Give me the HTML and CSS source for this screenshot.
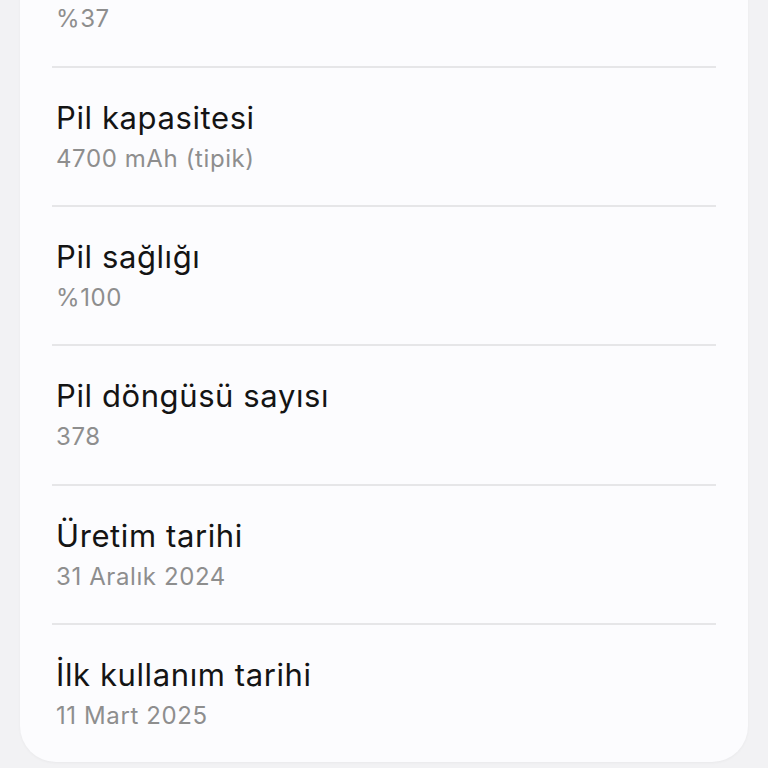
FILE: index.html
```html
<!DOCTYPE html>
<html lang="tr">
<head>
<meta charset="utf-8">
<link rel="stylesheet" href="styles.css">
</head>
<body>
<div class="screen">
  <div class="card">
    <div class="row row-partial">
      <div class="value">%37</div>
    </div>
    <div class="row">
      <div class="title">Pil kapasitesi</div>
      <div class="value">4700 mAh (tipik)</div>
    </div>
    <div class="row">
      <div class="title">Pil sağlığı</div>
      <div class="value">%100</div>
    </div>
    <div class="row">
      <div class="title">Pil döngüsü sayısı</div>
      <div class="value">378</div>
    </div>
    <div class="row">
      <div class="title">Üretim tarihi</div>
      <div class="value">31 Aralık 2024</div>
    </div>
    <div class="row">
      <div class="title">İlk kullanım tarihi</div>
      <div class="value">11 Mart 2025</div>
    </div>
  </div>
</div>
</body>
</html>
```
FILE: styles.css
```css
html, body {
  margin: 0;
  padding: 0;
  background: #f2f2f4;
}
body {
  font-family: Inter, "Open Sans", sans-serif;
}
.screen {
  height: 768px;
  box-sizing: border-box;
  padding-bottom: 6px;
  display: flex;
  flex-direction: column;
  justify-content: flex-end;
  overflow: hidden;
}
.card {
  flex-shrink: 0;
  margin: 0 20px;
  padding: 0 32px;
  background: #fcfcfe;
  border-radius: 0 0 36px 36px;
  box-shadow: 0 1px 3px rgba(0,0,0,0.04);
}
.row {
  height: 139.2px;
  box-sizing: border-box;
  padding: 31px 4px 0;
  border-top: 2px solid #e6e6e8;
}
.row-partial {
  border-top: none;
  height: auto;
  padding: 40px 4px 29px;
}
.title {
  font-size: 31px;
  line-height: 38px;
  letter-spacing: 0.6px;
  color: #141414;
}
.value {
  margin-top: 4px;
  font-size: 24px;
  line-height: 36px;
  letter-spacing: 0.6px;
  color: #8e8e8e;
}
.row-partial .value {
  margin-top: 0;
}
```
